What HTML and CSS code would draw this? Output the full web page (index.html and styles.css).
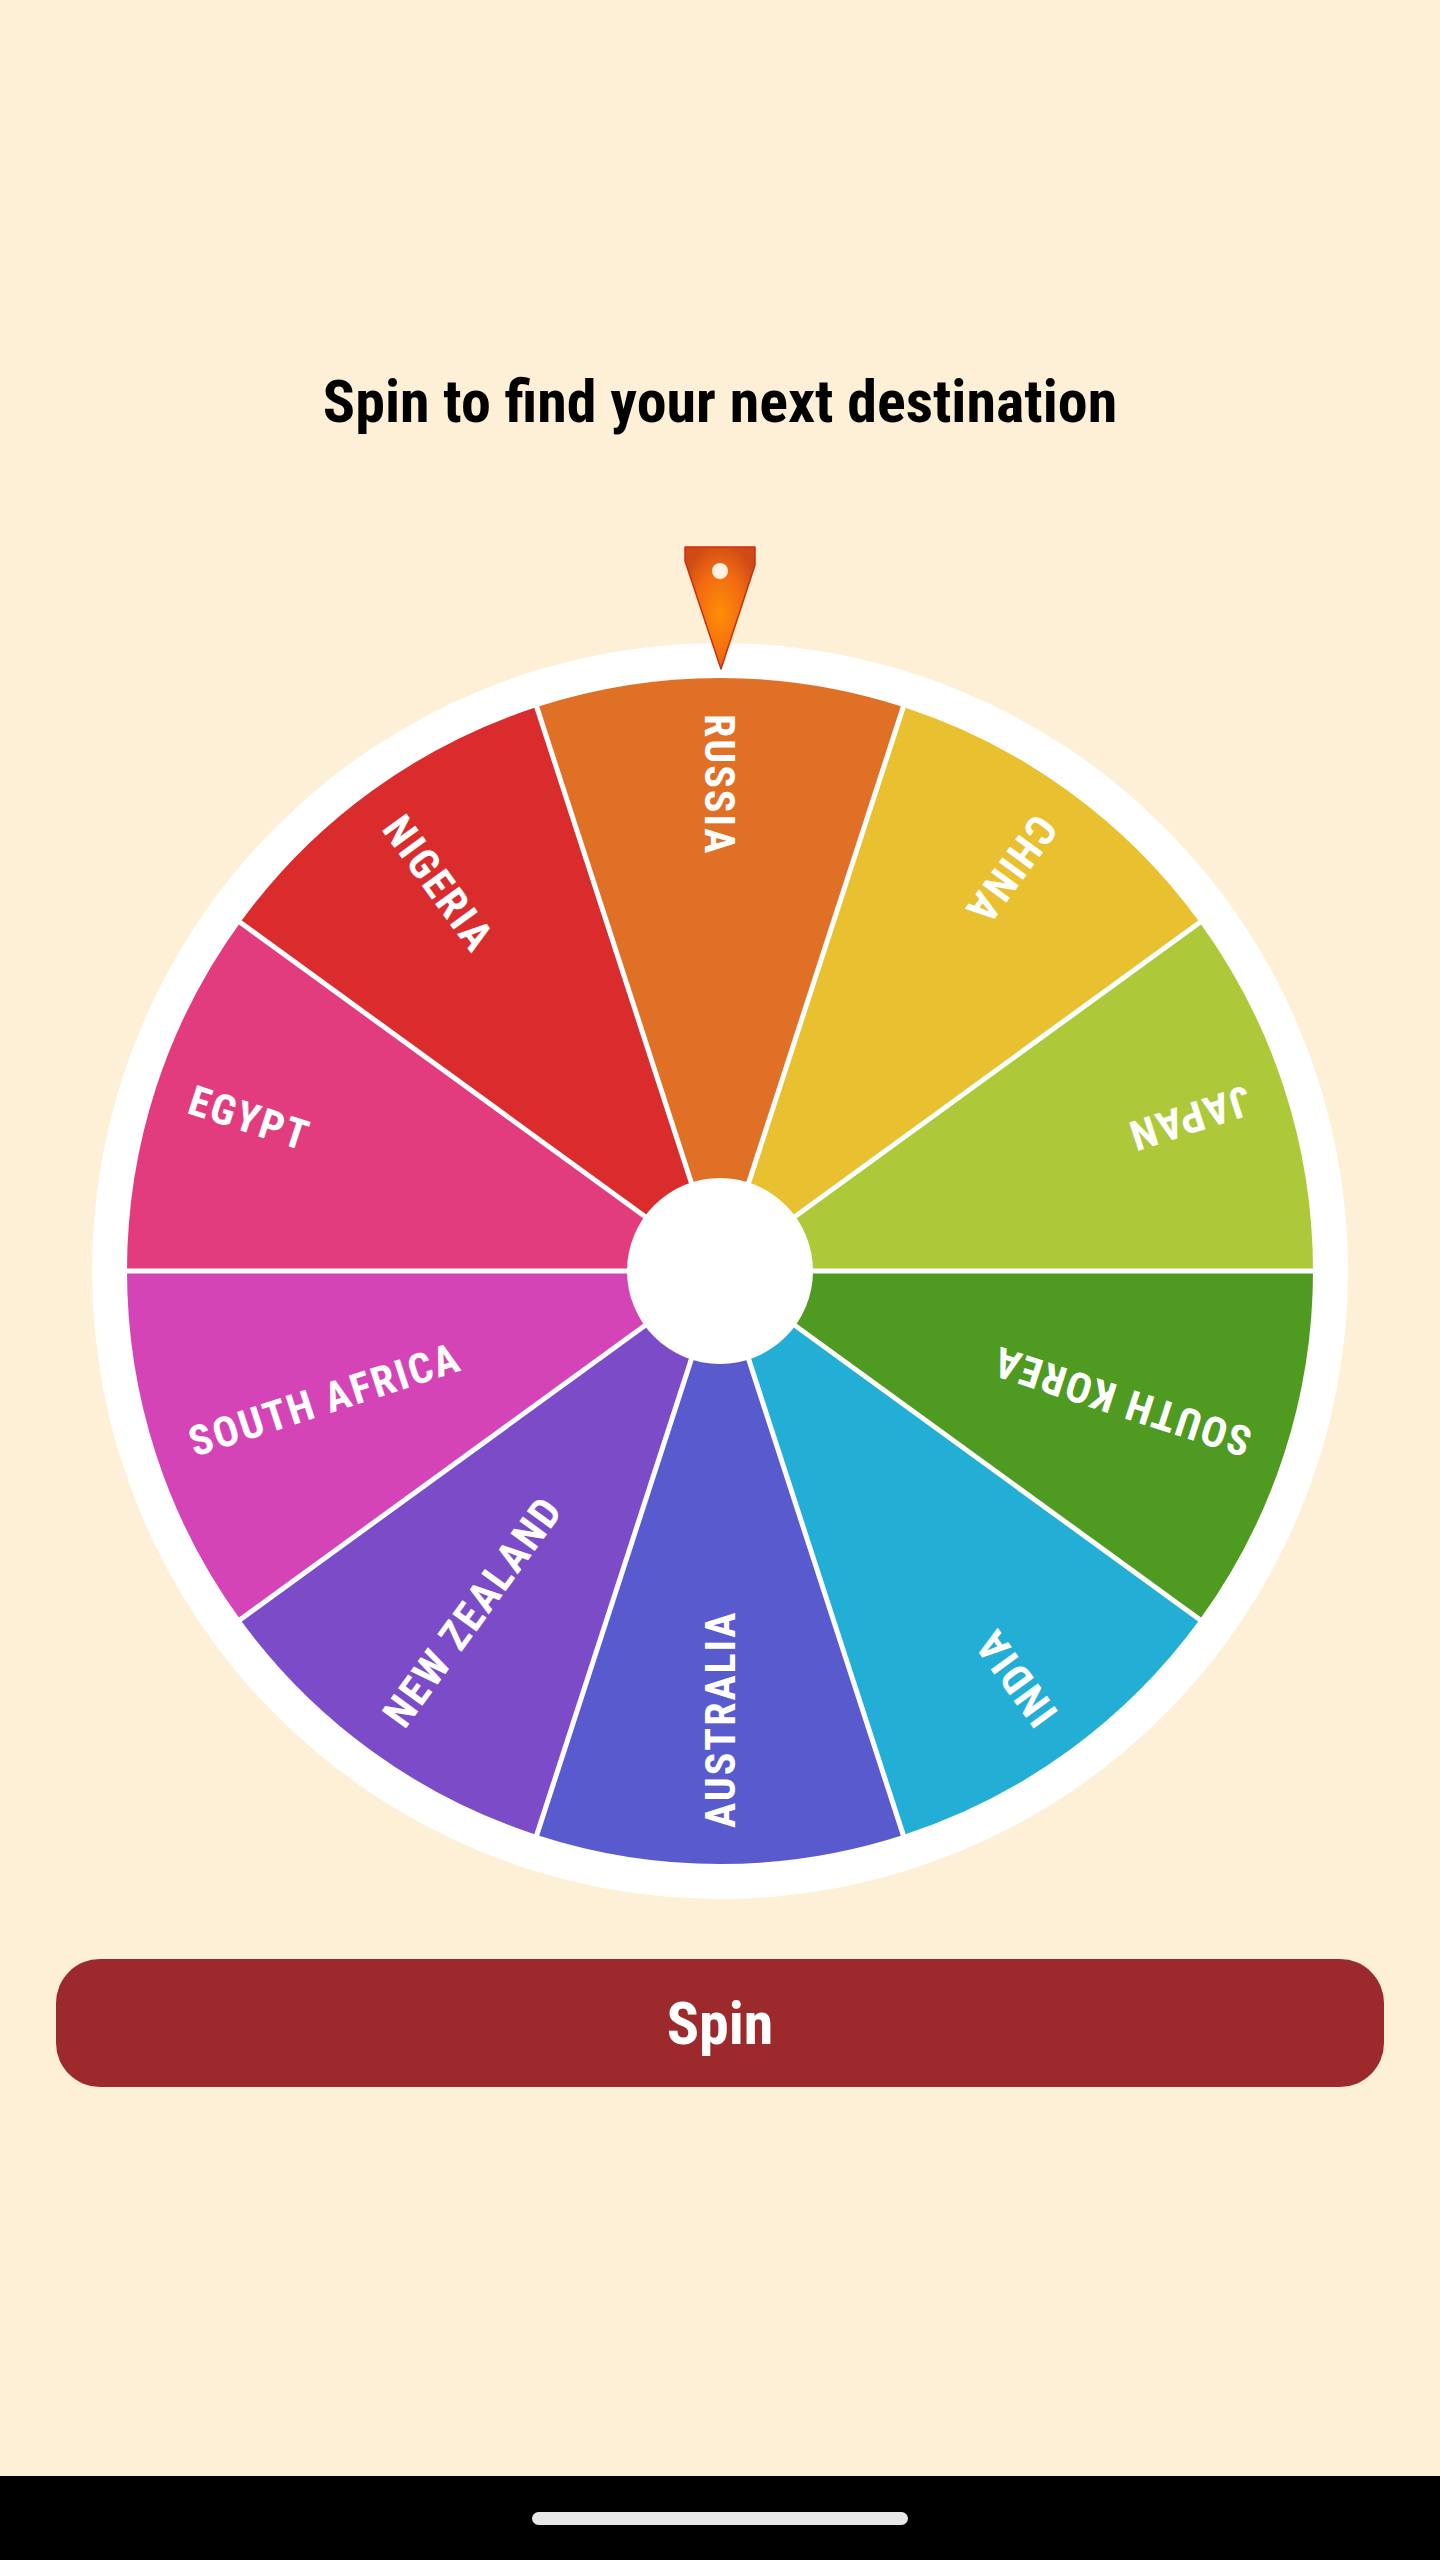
FILE: index.html
```html
<!DOCTYPE html>
<html lang="en">
<head>
<meta charset="utf-8">
<title>Spin the wheel</title>
<link rel="stylesheet" href="styles.css">
</head>
<body>
<div class="screen">
  <main class="content">
    <h1 class="title">Spin to find your next destination</h1>
    <div class="wheel-wrap">
      <svg class="wheel" width="1260" height="1360" viewBox="-630 -730 1260 1360" xmlns="http://www.w3.org/2000/svg">
        <defs>
          <radialGradient id="pg" cx="0.5" cy="0.55" r="0.6">
            <stop offset="0" stop-color="#ff8e05"/>
            <stop offset="0.6" stop-color="#f06a12"/>
            <stop offset="1" stop-color="#cf4a14"/>
          </radialGradient>
        </defs>
        <circle cx="0" cy="0" r="628" fill="#ffffff"/>
        <g transform="rotate(0)"><path class="seg" fill="#e07026" d="M0 0 L-183.25 -563.98 A593 593 0 0 1 183.25 -563.98 Z"/><text class="label" transform="translate(0,-557) rotate(90)" dy="0.35em">RUSSIA</text></g>
        <g transform="rotate(36)"><path class="seg" fill="#e8c030" d="M0 0 L-183.25 -563.98 A593 593 0 0 1 183.25 -563.98 Z"/><text class="label" transform="translate(0,-557) rotate(90)" dy="0.35em">CHINA</text></g>
        <g transform="rotate(72)"><path class="seg" fill="#adc93a" d="M0 0 L-183.25 -563.98 A593 593 0 0 1 183.25 -563.98 Z"/><text class="label" transform="translate(0,-557) rotate(90)" dy="0.35em">JAPAN</text></g>
        <g transform="rotate(108)"><path class="seg" fill="#4f9a20" d="M0 0 L-183.25 -563.98 A593 593 0 0 1 183.25 -563.98 Z"/><text class="label" transform="translate(0,-557) rotate(90)" dy="0.35em">SOUTH KOREA</text></g>
        <g transform="rotate(144)"><path class="seg" fill="#23afd5" d="M0 0 L-183.25 -563.98 A593 593 0 0 1 183.25 -563.98 Z"/><text class="label" transform="translate(0,-557) rotate(90)" dy="0.35em">INDIA</text></g>
        <g transform="rotate(180)"><path class="seg" fill="#5a5acf" d="M0 0 L-183.25 -563.98 A593 593 0 0 1 183.25 -563.98 Z"/><text class="label" transform="translate(0,-557) rotate(90)" dy="0.35em">AUSTRALIA</text></g>
        <g transform="rotate(216)"><path class="seg" fill="#7c4bc8" d="M0 0 L-183.25 -563.98 A593 593 0 0 1 183.25 -563.98 Z"/><text class="label" transform="translate(0,-557) rotate(90)" dy="0.35em">NEW ZEALAND</text></g>
        <g transform="rotate(252)"><path class="seg" fill="#d544b6" d="M0 0 L-183.25 -563.98 A593 593 0 0 1 183.25 -563.98 Z"/><text class="label" transform="translate(0,-557) rotate(90)" dy="0.35em">SOUTH AFRICA</text></g>
        <g transform="rotate(288)"><path class="seg" fill="#e23c7f" d="M0 0 L-183.25 -563.98 A593 593 0 0 1 183.25 -563.98 Z"/><text class="label" transform="translate(0,-557) rotate(90)" dy="0.35em">EGYPT</text></g>
        <g transform="rotate(324)"><path class="seg" fill="#da2b2d" d="M0 0 L-183.25 -563.98 A593 593 0 0 1 183.25 -563.98 Z"/><text class="label" transform="translate(0,-557) rotate(90)" dy="0.35em">NIGERIA</text></g>
        <g class="dividers">
          <line x1="0" y1="0" x2="0" y2="-595" transform="rotate(18)"/>
          <line x1="0" y1="0" x2="0" y2="-595" transform="rotate(54)"/>
          <line x1="0" y1="0" x2="0" y2="-595" transform="rotate(90)"/>
          <line x1="0" y1="0" x2="0" y2="-595" transform="rotate(126)"/>
          <line x1="0" y1="0" x2="0" y2="-595" transform="rotate(162)"/>
          <line x1="0" y1="0" x2="0" y2="-595" transform="rotate(198)"/>
          <line x1="0" y1="0" x2="0" y2="-595" transform="rotate(234)"/>
          <line x1="0" y1="0" x2="0" y2="-595" transform="rotate(270)"/>
          <line x1="0" y1="0" x2="0" y2="-595" transform="rotate(306)"/>
          <line x1="0" y1="0" x2="0" y2="-595" transform="rotate(342)"/>
        </g>
        <circle cx="0" cy="0" r="93" fill="#ffffff"/>
        <path class="pointer" d="M-35 -724 H35 V-706 L1 -602 L-35 -710 Z" fill="url(#pg)"/>
        <circle cx="0" cy="-700" r="8" fill="#fff3df"/>
      </svg>
    </div>
    <button class="spin-btn" type="button">Spin</button>
  </main>
  <div class="nav-bar"><div class="home-indicator"></div></div>
</div>
</body>
</html>
```

FILE: styles.css
```css
html, body {
  margin: 0;
  padding: 0;
}

body {
  background: #fdf0d6;
  font-family: "Roboto Condensed", "Liberation Sans Narrow", "Roboto", sans-serif;
  font-stretch: condensed;
}

.screen {
  min-height: 2560px;
  display: flex;
  flex-direction: column;
}

.content {
  flex: 1;
  display: flex;
  flex-direction: column;
  align-items: center;
}

.title {
  margin: 0;
  padding-top: 368px;
  font-size: 60px;
  line-height: 68px;
  font-weight: 700;
  color: #000000;
  text-align: center;
}

.wheel-wrap {
  margin-top: 105px;
  display: flex;
  justify-content: center;
  width: 100%;
}

.wheel {
  display: block;
}

.label {
  font-family: "Roboto Condensed", "Liberation Sans Narrow", "Roboto", sans-serif;
  font-weight: 700;
  font-size: 42px;
  letter-spacing: 2px;
  fill: #ffffff;
}

.dividers line {
  stroke: #ffffff;
  stroke-width: 5;
}

.pointer {
  stroke: #c9300e;
  stroke-width: 1.5;
  stroke-linejoin: round;
}

.spin-btn {
  margin-top: 58px;
  align-self: stretch;
  margin-left: 56px;
  margin-right: 56px;
  height: 128px;
  border: none;
  border-radius: 44px;
  background: #9c2a2c;
  color: #ffffff;
  font-family: "Roboto Condensed", "Liberation Sans Narrow", "Roboto", sans-serif;
  font-size: 60px;
  font-weight: 700;
  padding: 0;
}

.nav-bar {
  height: 84px;
  background: #000000;
  display: flex;
  justify-content: center;
  align-items: center;
}

.home-indicator {
  width: 376px;
  height: 13px;
  border-radius: 7px;
  background: #e8e8e8;
}
```
